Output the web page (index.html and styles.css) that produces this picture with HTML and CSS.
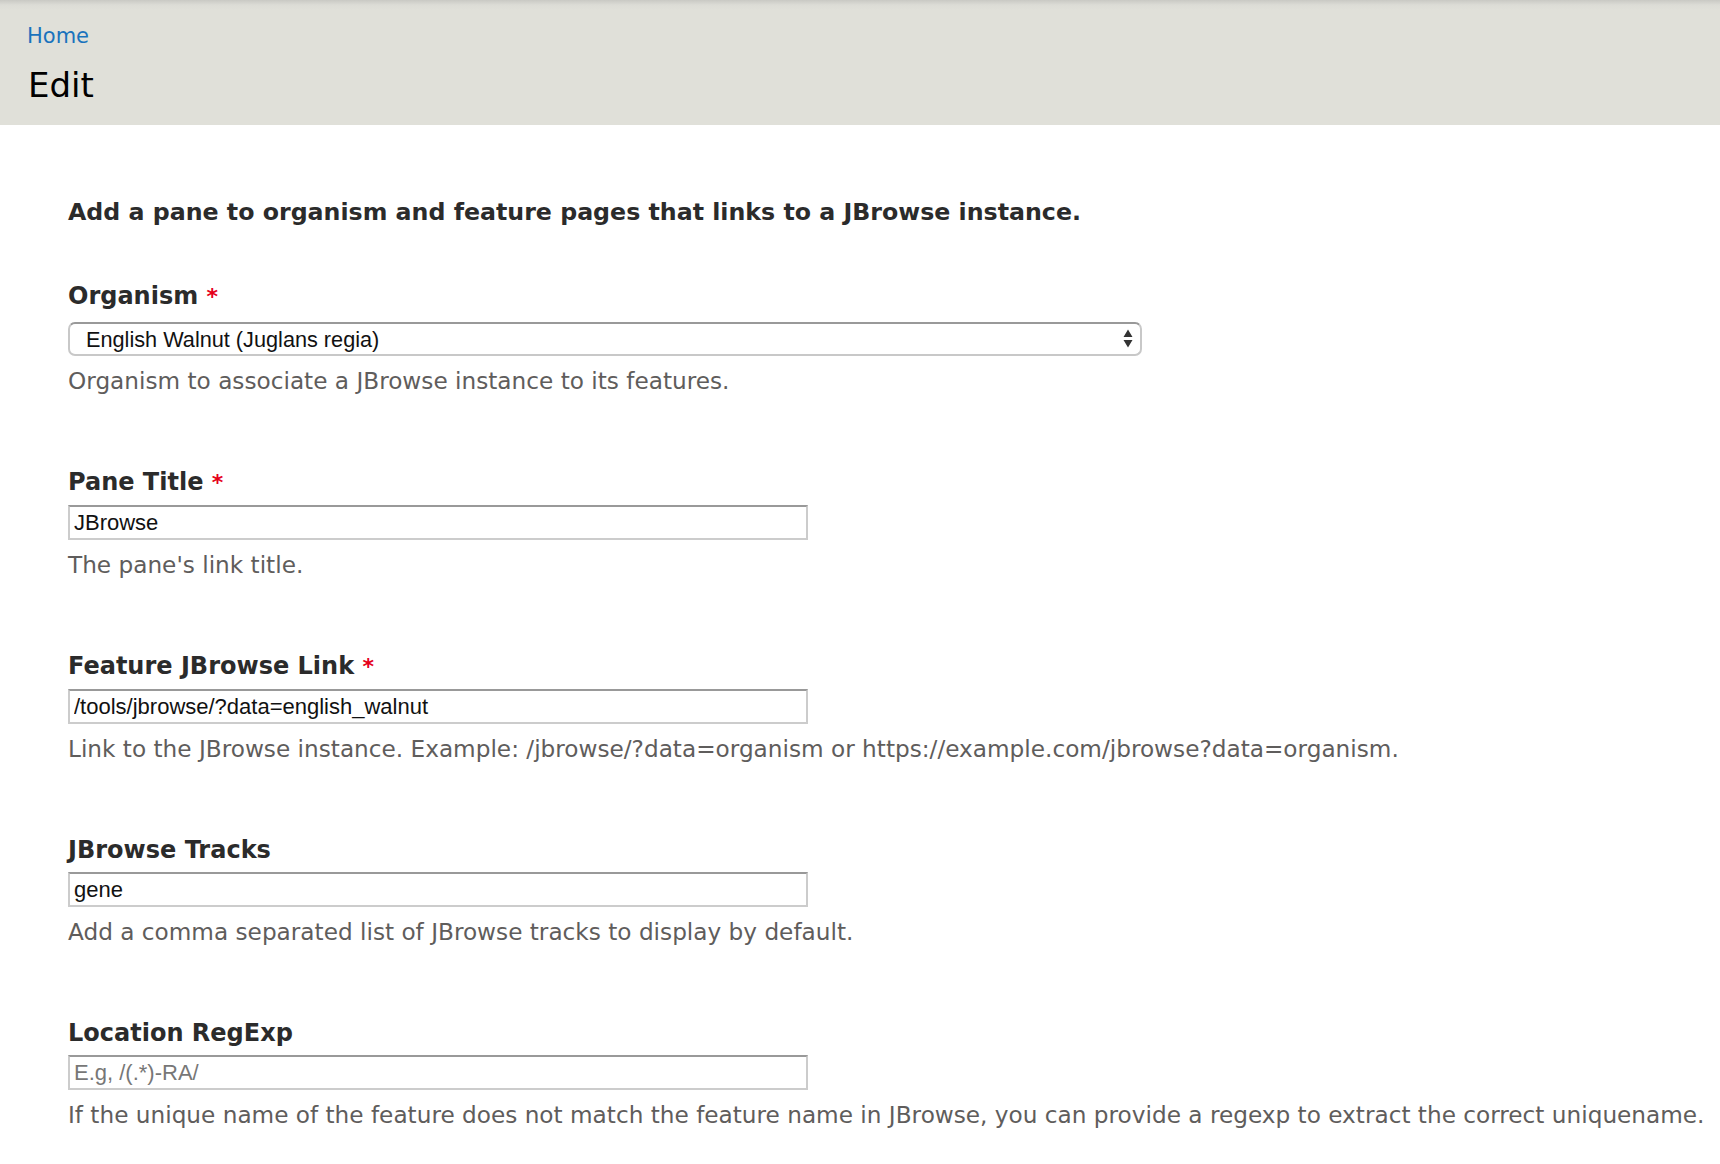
FILE: index.html
```html
<!DOCTYPE html>
<html lang="en">
<head>
<meta charset="utf-8">
<title>Edit</title>
<link rel="stylesheet" href="styles.css">
</head>
<body>
<header class="page-header">
  <nav class="breadcrumb"><a href="#">Home</a></nav>
  <h1 class="page-title">Edit</h1>
</header>
<main class="content">
  <p class="intro">Add a pane to organism and feature pages that links to a JBrowse instance.</p>

  <div class="form-item">
    <label class="form-label">Organism <span class="req">*</span></label>
    <div class="select-wrap">
      <select class="form-select">
        <option>English Walnut (Juglans regia)</option>
      </select>
      <svg class="select-arrows" width="10" height="19" viewBox="0 0 10 19"><path d="M5 0.5 L9.5 8 H0.5 Z M5 18.5 L9.5 11 H0.5 Z" fill="#333"/></svg>
    </div>
    <div class="description">Organism to associate a JBrowse instance to its features.</div>
  </div>

  <div class="form-item">
    <label class="form-label">Pane Title <span class="req">*</span></label>
    <input class="form-text" type="text" value="JBrowse">
    <div class="description">The pane's link title.</div>
  </div>

  <div class="form-item">
    <label class="form-label">Feature JBrowse Link <span class="req">*</span></label>
    <input class="form-text" type="text" value="/tools/jbrowse/?data=english_walnut">
    <div class="description">Link to the JBrowse instance. Example: /jbrowse/?data=organism or https://example.com/jbrowse?data=organism.</div>
  </div>

  <div class="form-item">
    <label class="form-label">JBrowse Tracks</label>
    <input class="form-text" type="text" value="gene">
    <div class="description">Add a comma separated list of JBrowse tracks to display by default.</div>
  </div>

  <div class="form-item">
    <label class="form-label">Location RegExp</label>
    <input class="form-text" type="text" placeholder="E.g, /(.*)-RA/">
    <div class="description">If the unique name of the feature does not match the feature name in JBrowse, you can provide a regexp to extract the correct uniquename.</div>
  </div>
</main>
</body>
</html>
```

FILE: styles.css
```css
html, body {
  margin: 0;
  padding: 0;
  background: #ffffff;
}

body {
  font-family: "DejaVu Sans", "Lucida Grande", sans-serif;
  color: #333333;
  width: 1720px;
  height: 1164px;
  overflow: hidden;
}

.page-header {
  height: 125px;
  box-sizing: border-box;
  padding: 20px 28px 0 27px;
  background: linear-gradient(to bottom, #c9c9c4 0px, #dcdcd6 5px, #e0e0d9 10px, #e0e0d9 100%);
}

.breadcrumb {
  font-size: 21px;
  line-height: 32px;
}

.breadcrumb a {
  color: #1a73bd;
  text-decoration: none;
}

.page-title {
  margin: 11px 0 0 1px;
  font-size: 34px;
  line-height: 44px;
  font-weight: normal;
  color: #000000;
}

.content {
  padding: 72px 0 0 68px;
}

.intro {
  margin: 0 0 54px 0;
  font-size: 23.7px;
  line-height: 30px;
  font-weight: bold;
  color: #2b2b2b;
}

.form-item {
  margin-bottom: 71px;
}

.form-label {
  display: block;
  font-size: 24px;
  line-height: 30px;
  font-weight: bold;
  color: #2b2b2b;
  margin-bottom: 7px;
}

.form-item:first-of-type .form-label {
  margin-bottom: 10px;
}

.req {
  color: #e5001a;
  font-size: 22px;
}

.select-wrap {
  position: relative;
  width: 1074px;
}

.form-select {
  -webkit-appearance: none;
  appearance: none;
  display: block;
  width: 100%;
  height: 34px;
  box-sizing: border-box;
  margin: 0;
  padding: 0 0 0 16px;
  border: 2px solid #c8c8c8;
  border-top-color: #999999;
  border-radius: 7px;
  background: #ffffff;
  font-family: "Liberation Sans", Arial, sans-serif;
  font-size: 21.7px;
  color: #111111;
}

.select-arrows {
  position: absolute;
  right: 9px;
  top: 7px;
}

.form-text {
  display: block;
  width: 740px;
  height: 35px;
  box-sizing: border-box;
  margin: 0;
  padding: 0 4px;
  border: 2px solid #cccccc;
  border-top-color: #999999;
  border-radius: 0;
  background: #ffffff;
  font-family: "Liberation Sans", Arial, sans-serif;
  font-size: 22px;
  color: #111111;
  outline: none;
}

.form-text::placeholder {
  color: #777777;
  opacity: 1;
}

.description {
  margin-top: 10px;
  font-size: 23.2px;
  line-height: 30px;
  color: #5f5d5c;
}

.form-item:first-of-type .description {
  margin-top: 10px;
}
```
